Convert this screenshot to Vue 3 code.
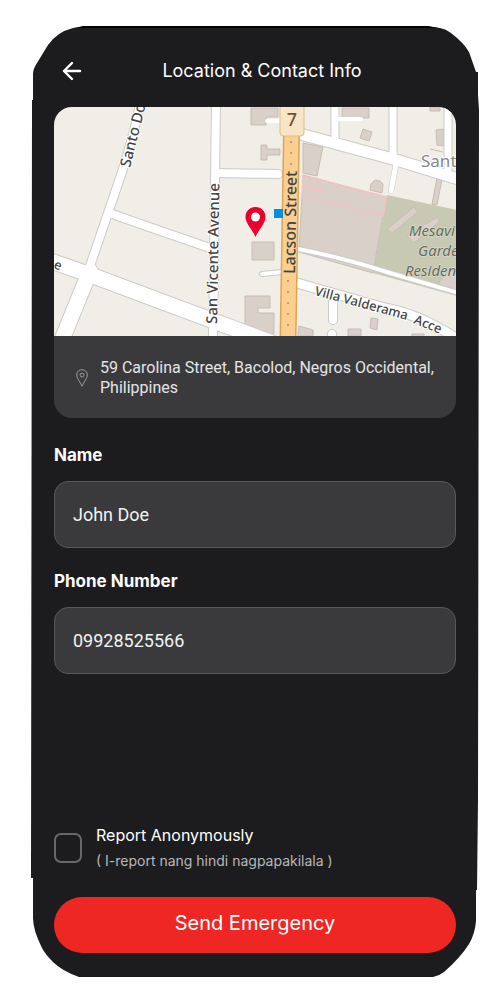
<script setup>
import { ref } from 'vue';

const address = ref('59 Carolina Street, Bacolod, Negros Occidental, Philippines');
const name = ref('John Doe');
const phone = ref('09928525566');
const anonymous = ref(false);
</script>

<template>
    <main class="phone">
        <svg class="phone-shape" viewBox="31 26 448 951" preserveAspectRatio="none" aria-hidden="true">
            <path
                fill="#1c1c1e"
                d="M84 26H427L440 28Q446 29 451 33Q464 43 469 52L476 72H478V95L479 110L478 800L477 890H476V921Q475 934 469 944Q461 957 444 972Q439 976 433 977H79Q62 971 53 962Q45 954 42 948Q33 930 33 918V878H31L32 100H33V74Q33 69 37 63L48 45Q57 32 73 28Z"
            />
            <path fill="#000" d="M84 26H427L438 28H76Z" />
        </svg>

        <header class="header">
            <button class="back" type="button" aria-label="Back">
                <svg viewBox="0 0 20 20" width="20" height="20">
                    <path d="M10 2 2 10l8 8M2 10h16" fill="none" stroke="#fff" stroke-width="2.4" stroke-linecap="round" stroke-linejoin="round" />
                </svg>
            </button>
            <h1 class="title">Location &amp; Contact Info</h1>
        </header>

        <section class="location">
            <svg class="map" viewBox="54 107 402 229" role="img" aria-label="Map">
                <rect x="54" y="107" width="402" height="229" fill="#f0eee7" />

                <!-- garden and big blocks -->
                <path d="M387 195 457 210V296L373 273Z" fill="#c8c9b2" />
                <path d="M303 175 386 197 373 273 299 252Z" fill="#d9d0c9" stroke="#cbbdb3" />
                <path d="M303 176 386 197 383 216 303 196ZM305 183l17 5v4l-16-4" fill="none" stroke="#eec5c5" stroke-width="2" />

                <!-- buildings -->
                <g fill="#d9d0c9" stroke="#c9bcb1" stroke-width="1">
                    <path d="M251 108h27v9h-12v8h-15z" />
                    <path d="M261 145h6v4h13v6h-13v5h-6z" />
                    <path d="M342 108h27v10h-27z" />
                    <path d="M363 129l9 3-3 9-9-3z" />
                    <path d="M303 143l20 4-6 29-14-3z" />
                    <path d="M371 184l4-4 5 1 3 3-1 9-12-3z" />
                    <path d="M436 130l8-1v17l-7-1z" />
                    <path d="M430 107h10v4h-10z" />
                    <path d="M430 149l13 3" />
                    <path d="M437 178l5 1-5 26-5-1z" />
                    <path d="M252 242h22v18h-22z" />
                    <path d="M245 296h25v12h-12v5h16v20l-8 3-21-9z" />
                    <path d="M371 318l7 1-1 11-7-2z" />
                    <path d="M299 326l14 4v6h-15z" />
                    <path d="M348 329h13v7h-13z" />
                    <path d="M412 334h12v3h-12z" />
                    <path d="M387 229l27-22 4 5-26 21z" />
                    <path d="M407 236l30-19 3 4-26 22z" />
                    <path d="M438 283l12-13 8 4v21z" />
                </g>

                <!-- side roads: grey casing under a white fill -->
                <g fill="none" stroke="#cbcbc8" stroke-linecap="round">
                    <path d="M140 104Q134 135 122 172L89 269" stroke-width="10" />
                    <path d="M90 271 61 342" stroke-width="17" />
                    <path d="M112 214Q160 231 210 248" stroke-width="10" />
                    <path d="M48 260 88 274 270 342" stroke-width="17" />
                    <path d="M216 102 213 340" stroke-width="10" />
                    <path d="M217 173 278 174" stroke-width="10" />
                    <path d="M300 134 393 159 462 180" stroke-width="13" />
                    <path d="M335 102V142M393 102V158M448 102V172" stroke-width="9" />
                    <path d="M396 164 391 191" stroke-width="6" />
                    <path d="M298 249Q345 258 390 273L462 294" stroke-width="6" />
                    <path d="M297 283 325 291 385 308Q420 314 462 342" stroke-width="11" />
                    <path d="M333 301V320M332 334V340" stroke-width="10" />
                    <path d="M262 274 282 272" stroke-width="6" />
                </g>
                <g fill="none" stroke="#fff" stroke-linecap="round">
                    <path d="M140 104Q134 135 122 172L89 269" stroke-width="8" />
                    <path d="M90 271 61 342" stroke-width="15" />
                    <path d="M112 214Q160 231 210 248" stroke-width="8" />
                    <path d="M48 260 88 274 270 342" stroke-width="15" />
                    <path d="M216 102 213 340" stroke-width="8" />
                    <path d="M217 173 278 174" stroke-width="8" />
                    <path d="M300 134 393 159 462 180" stroke-width="11" />
                    <path d="M335 102V142M393 102V158M448 102V172" stroke-width="7" />
                    <path d="M396 164 391 191" stroke-width="5" />
                    <path d="M298 249Q345 258 390 273L462 294" stroke-width="4" />
                    <path d="M297 283 325 291 385 308Q420 314 462 342" stroke-width="9" />
                    <path d="M333 301V320M332 334V340" stroke-width="8" />
                    <path d="M262 274 282 272" stroke-width="4" />
                    <path d="M267 121h14M339 119h22" stroke-width="4" />
                </g>

                <!-- main street -->
                <path d="M292 104 288 340" stroke="#d9a653" stroke-width="17" />
                <path d="M292 104 288 340" stroke="#fbcf90" stroke-width="14" />
                <path d="M291 141V166M288 280V326" stroke="#c39c83" stroke-width="2" stroke-dasharray="2 9" />
                <rect x="280" y="98" width="24" height="38" rx="3" fill="#f8e4c7" stroke="#dcbd8c" />
                <text class="route" x="292" y="126" text-anchor="middle">7</text>

                <!-- street names -->
                <g class="street">
                    <text transform="translate(130 168) rotate(-76)">Santo Do</text>
                    <text transform="translate(217 324) rotate(-89)">San Vicente Avenue</text>
                    <text class="main-street" transform="translate(295 274) rotate(-89)">Lacson Street</text>
                    <text class="lane" transform="translate(314 295) rotate(15)">Villa Valderama</text>
                    <text class="lane" transform="translate(413 323) rotate(22)">Acce</text>
                    <text class="lane" transform="translate(53 268) rotate(20)">e</text>
                </g>
                <text class="area" x="421" y="167">Sant</text>
                <g class="garden">
                    <text x="409" y="236">Mesavi</text>
                    <text x="418" y="256">Garde</text>
                    <text x="405" y="276">Residen</text>
                </g>

                <rect x="274" y="209" width="9" height="9" fill="#0092da" />
                <path fill="#e9002d" d="M255.5 207C249.5 207 245.500 211.500 245.500 217C245.500 223.500 252 229 255.500 237C259 229 265.500 223.500 265.500 217C265.500 211.500 261.500 207 255.500 207Z" />
                <circle cx="255.5" cy="217" r="4.5" fill="#fff" />
            </svg>
            <div class="address">
                <svg class="address-icon" viewBox="0 0 12 18" width="12" height="18" fill="none" stroke="#9a9a9c">
                    <path d="M6 .7C2.900.7.7 3 .7 6c0 3.500 3.300 6.500 5.300 11.200C8 12.500 11.300 9.500 11.300 6 11.300 3 9.100.7 6 .7Z" />
                    <circle cx="6" cy="6" r="2" />
                </svg>
                <p class="address-text">{{ address }}</p>
            </div>
        </section>

        <form class="form" @submit.prevent>
            <label class="label" for="name">Name</label>
            <input id="name" v-model="name" class="field" type="text" />
            <label class="label" for="phone">Phone Number</label>
            <input id="phone" v-model="phone" class="field" type="tel" />

            <div class="anonymous">
                <input id="anonymous" v-model="anonymous" class="checkbox" type="checkbox" />
                <label class="anonymous-label" for="anonymous">
                    Report Anonymously
                    <small class="hint">( I-report nang hindi nagpapakilala )</small>
                </label>
            </div>
            <button class="send" type="submit">Send Emergency</button>
        </form>
    </main>
</template>

<style>
body {
    background: #fff;
}
</style>

<style scoped>
.phone {
    position: relative;
    z-index: 0;
    box-sizing: border-box;
    display: flex;
    flex-direction: column;
    min-height: calc(100vh - 49px);
    margin: 26px 21px 23px 31px;
    padding: 0 23px 24px;
    color: #fff;
    font-family: Inter, "Open Sans", sans-serif;
}

.phone-shape {
    position: absolute;
    top: 0;
    left: 0;
    z-index: -1;
    width: 100%;
    height: 100%;
}

.header {
    display: grid;
    grid-template-columns: 36px 1fr 36px;
    align-items: center;
    height: 72px;
    padding-top: 9px;
}

.back {
    display: flex;
    padding: 8px;
    border: 0;
    background: none;
    cursor: pointer;
}

.title {
    margin: 0;
    padding-left: 14px;
    font-size: 18px;
    font-weight: 400;
    line-height: 24px;
    text-align: center;
}

.location {
    overflow: hidden;
    border-radius: 18px;
    background: #3a3a3c;
}

.map {
    display: block;
    width: 100%;
    height: auto;
}

.route {
    fill: #6b5434;
    font: 500 18px "Noto Sans", sans-serif;
}

.street {
    fill: #444;
    stroke: #fff;
    stroke-width: 2px;
    paint-order: stroke;
    font: 500 15px "Noto Sans", sans-serif;
}

.main-street {
    font-size: 16px;
    stroke: #fbcf90;
}

.lane {
    font-size: 13px;
}

.area {
    fill: #86868a;
    stroke: #fff;
    stroke-width: 2px;
    paint-order: stroke;
    font: 17px "Noto Sans", sans-serif;
}

.garden {
    fill: #666b5e;
    stroke: #e0e0d4;
    stroke-width: 1px;
    paint-order: stroke;
    font: italic 15px "Noto Sans", sans-serif;
}

.address {
    display: flex;
    align-items: center;
    gap: 12px;
    padding: 22px 16px 20px 22px;
}

.address-icon {
    flex: none;
}

.address-text {
    margin: 0;
    color: #e4e4e6;
    font-family: Roboto, sans-serif;
    font-size: 16px;
    line-height: 20px;
}

.form {
    display: flex;
    flex: 1;
    flex-direction: column;
    padding-top: 25px;
}

.label {
    margin-bottom: 14px;
    font-size: 17px;
    font-weight: 700;
    line-height: 24px;
}

.field {
    box-sizing: border-box;
    width: 100%;
    height: 67px;
    margin-bottom: 21px;
    padding: 0 18px;
    border: 1px solid #58585a;
    border-radius: 14px;
    background: #3a3a3c;
    color: #f2f2f2;
    font-family: Roboto, sans-serif;
    font-size: 18px;
}

.anonymous {
    display: flex;
    align-items: center;
    gap: 14px;
    margin-top: auto;
    margin-bottom: 24px;
}

.checkbox {
    flex: none;
    width: 28px;
    height: 30px;
    margin: 0;
    border: 2px solid #68686a;
    border-radius: 7px;
    appearance: none;
    cursor: pointer;
}

.checkbox:checked {
    background: #ee2724;
}

.anonymous-label {
    font-size: 16px;
    line-height: 25px;
}

.hint {
    display: block;
    color: #b8b8ba;
    font-size: 14px;
}

.send {
    height: 56px;
    padding: 0 20px 4px;
    border: 0;
    border-radius: 28px;
    background: #ee2724;
    color: #fff;
    font-family: inherit;
    font-size: 20px;
    cursor: pointer;
}
</style>
